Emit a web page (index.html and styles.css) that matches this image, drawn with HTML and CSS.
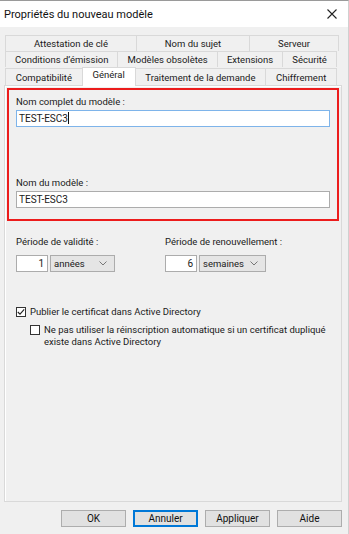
FILE: index.html
```html
<!DOCTYPE html>
<html lang="fr">
<head>
    <meta charset="UTF-8">
    <title>Propriétés du nouveau modèle</title>
    <link rel="stylesheet" href="styles.css">
</head>
<body>
    <div class="dialog">
        <div class="titlebar">
            <span class="title">Propriétés du nouveau modèle</span>
            <svg class="close" width="10" height="10" viewBox="0 0 10 10">
                <path d="M0.5 0.5 L9.5 9.5 M9.5 0.5 L0.5 9.5" stroke="#222" stroke-width="1.1" fill="none"/>
            </svg>
        </div>

        <div class="tabs">
            <div class="tab-row row-1">
                <div class="tab">Attestation de clé</div>
                <div class="tab">Nom du sujet</div>
                <div class="tab">Serveur</div>
            </div>
            <div class="tab-row row-2">
                <div class="tab">Conditions d’émission</div>
                <div class="tab">Modèles obsolètes</div>
                <div class="tab">Extensions</div>
                <div class="tab">Sécurité</div>
            </div>
            <div class="tab-row row-3">
                <div class="tab">Compatibilité</div>
                <div class="tab active">Général</div>
                <div class="tab">Traitement de la demande</div>
                <div class="tab">Chiffrement</div>
            </div>
        </div>

        <div class="panel">
            <div class="highlight">
                <div class="field">
                    <label class="label">Nom complet du modèle :</label>
                    <div class="textbox focused">TEST-ESC3<span class="caret"></span></div>
                </div>
                <div class="field field-gap">
                    <label class="label">Nom du modèle :</label>
                    <div class="textbox">TEST-ESC3</div>
                </div>
            </div>

            <div class="periods">
                <div class="period">
                    <label class="label">Période de validité :</label>
                    <div class="period-inputs">
                        <div class="number">1</div>
                        <div class="select">
                            <span>années</span>
                            <svg width="8" height="5" viewBox="0 0 8 5"><path d="M0.5 0.5 L4 4 L7.5 0.5" stroke="#777" fill="none"/></svg>
                        </div>
                    </div>
                </div>
                <div class="period">
                    <label class="label">Période de renouvellement :</label>
                    <div class="period-inputs">
                        <div class="number">6</div>
                        <div class="select">
                            <span>semaines</span>
                            <svg width="8" height="5" viewBox="0 0 8 5"><path d="M0.5 0.5 L4 4 L7.5 0.5" stroke="#777" fill="none"/></svg>
                        </div>
                    </div>
                </div>
            </div>

            <div class="checks">
                <div class="check">
                    <span class="box">
                        <svg width="8" height="8" viewBox="0 0 8 8"><path d="M0.8 4 L3 6.2 L7.2 1.4" stroke="#222" stroke-width="1.1" fill="none"/></svg>
                    </span>
                    <span>Publier le certificat dans Active Directory</span>
                </div>
                <div class="check sub">
                    <span class="box"></span>
                    <span>Ne pas utiliser la réinscription automatique si un certificat dupliqué existe dans Active Directory</span>
                </div>
            </div>
        </div>

        <div class="buttons">
            <button class="btn">OK</button>
            <button class="btn default">Annuler</button>
            <button class="btn">Appliquer</button>
            <button class="btn">Aide</button>
        </div>
    </div>
</body>
</html>
```

FILE: styles.css
```css
* {
    box-sizing: border-box;
}
body {
    margin: 0;
    padding: 0;
    background: #f0f0f0;
    font-family: Roboto, "Noto Sans", sans-serif;
    font-size: 9.5px;
    color: #1a1a1a;
}
.dialog {
    width: 349px;
    height: 534px;
    border-top: 1px solid #9a9a9a;
    border-right: 1px solid #d0d0d0;
    background: #f0f0f0;
}
.titlebar {
    height: 26px;
    background: white;
    display: flex;
    align-items: center;
    justify-content: space-between;
    padding: 0 11px 0 4px;
}
.title {
    font-size: 11px;
    color: #111;
}
.tabs {
    margin-top: 8px;
    padding: 0 0 0 5px;
}
.tab-row {
    display: flex;
    height: 16px;
}
.row-1 {
    margin-right: 9px;
}
.row-2,
.row-3 {
    margin-right: 11px;
}
.tab {
    flex: 1 1 auto;
    padding: 0 4px;
    text-align: center;
    line-height: 15px;
    border: 1px solid #d9d9d9;
    border-bottom: none;
    margin-left: -1px;
    background: #f0f0f0;
    white-space: nowrap;
}
.tab:first-child {
    margin-left: 0;
}
.row-3 {
    height: 18px;
}
.row-3 .tab {
    margin-top: 1px;
    line-height: 17px;
}
.tab.active {
    background: white;
    margin-top: 0;
    height: 19px;
    line-height: 13px;
    position: relative;
    z-index: 1;
}
.panel {
    margin: 0 6px 0 4px;
    height: 417px;
    border: 1px solid #d9d9d9;
    box-shadow: inset 1px 1px 0 #ffffff;
    padding: 2px 2px 0 2px;
}
.highlight {
    border: 2px solid #ec1c1c;
    padding: 5px 7px 11px 7px;
}
.label {
    display: block;
    height: 15px;
    line-height: 14px;
}
.textbox {
    height: 17px;
    line-height: 15px;
    border: 1px solid #acacac;
    background: white;
    padding: 0 2px;
    font-size: 10px;
}
.textbox.focused {
    border-color: #7eb4ea;
}
.caret {
    display: inline-block;
    width: 1px;
    height: 12px;
    background: #111;
    vertical-align: -2px;
}
.field-gap {
    margin-top: 49px;
}
.periods {
    display: flex;
    margin: 14px 0 0 9px;
}
.period:first-child {
    width: 149px;
}
.period .label {
    margin-bottom: 5px;
}
.period-inputs {
    display: flex;
    gap: 2px;
}
.number {
    width: 32px;
    height: 17px;
    line-height: 15px;
    border: 1px solid #acacac;
    background: white;
    text-align: right;
    padding-right: 3px;
    font-size: 10px;
}
.select {
    width: 65px;
    height: 17px;
    border: 1px solid #acacac;
    background: #e5e5e5;
    display: flex;
    align-items: center;
    justify-content: space-between;
    padding: 0 7px 0 3px;
}
.period:last-child .select {
    width: 67px;
}
.checks {
    margin: 34px 0 0 9px;
}
.check {
    display: flex;
    align-items: flex-start;
    gap: 4px;
    line-height: 12px;
}
.check.sub {
    margin: 6px 0 0 14px;
    width: 300px;
}
.box {
    flex: none;
    width: 10px;
    height: 10px;
    border: 1px solid #333;
    background: white;
    margin-top: 1px;
    display: flex;
}
.buttons {
    display: flex;
    justify-content: flex-end;
    gap: 7px;
    margin: 8px 6px 0 0;
}
.btn {
    width: 65px;
    height: 17px;
    background: #e1e1e1;
    border: 1px solid #adadad;
    font-family: Roboto, "Noto Sans", sans-serif;
    font-size: 10px;
    color: #111;
    padding: 0;
}
.btn.default {
    border: 1px solid #0078d7;
    box-shadow: inset 0 0 0 1px #0078d7;
}
```
